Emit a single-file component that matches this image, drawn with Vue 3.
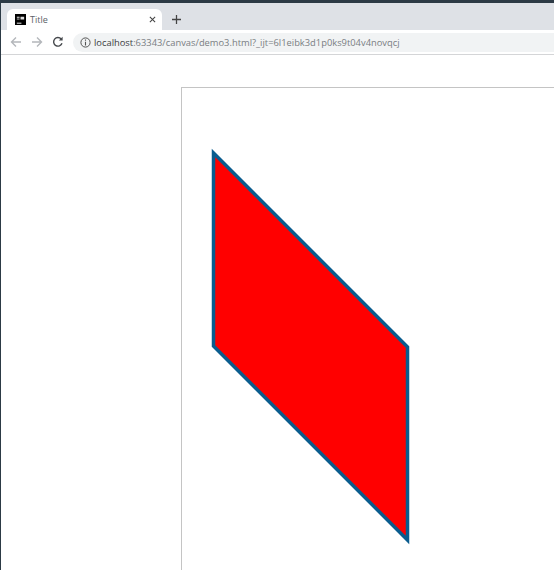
<script setup>
const url = { host: 'localhost', rest: ':63343/canvas/demo3.html?_ijt=6l1eibk3d1p0ks9t04v4novqcj' }
</script>

<template>
  <div class="window">
    <div class="tabstrip">
      <div class="tab">
        <svg class="favicon" width="11" height="11" viewBox="0 0 12 12">
          <rect width="12" height="12" fill="#000" />
          <rect x="2" y="3" width="3" height="1" fill="#fff" />
          <rect x="2" y="5" width="3" height="1" fill="#ccc" />
          <rect x="6" y="3" width="4" height="3" fill="#ddd" />
          <rect x="2" y="9.5" width="5" height="1" fill="#fff" />
        </svg>
        <span class="tab-title">Title</span>
        <svg class="tab-close" width="7" height="7" viewBox="0 0 8 8">
          <path d="M1 1 7 7M7 1 1 7" stroke="#444" stroke-width="1.2" fill="none" />
        </svg>
      </div>
      <svg class="new-tab" width="9" height="9" viewBox="0 0 10 10">
        <path d="M5 0V10M0 5H10" stroke="#444" stroke-width="1.4" fill="none" />
      </svg>
    </div>
    <div class="toolbar">
      <svg class="nav first" width="12" height="12" viewBox="0 0 12 12">
        <path d="M11 6H1.5M6 1.5 1.5 6 6 10.5" stroke="#b4b7bb" stroke-width="1.4" fill="none" />
      </svg>
      <svg class="nav" width="12" height="12" viewBox="0 0 12 12">
        <path d="M1 6H10.5M6 1.5 10.5 6 6 10.5" stroke="#b4b7bb" stroke-width="1.4" fill="none" />
      </svg>
      <svg class="nav" width="12" height="12" viewBox="0 0 12 12">
        <path d="M10 7.2A4.3 4.3 0 1 1 9.2 3" stroke="#45484c" stroke-width="1.4" fill="none" />
        <path d="M10.6 0.8V4.6H6.8Z" fill="#45484c" />
      </svg>
      <div class="omnibox">
        <svg class="info" width="11" height="11" viewBox="0 0 11 11">
          <circle cx="5.5" cy="5.5" r="4.6" stroke="#555" stroke-width="1" fill="none" />
          <path d="M5.5 4.8V8.4M5.5 2.6V3.8" stroke="#555" stroke-width="1.1" fill="none" />
        </svg>
        <span class="url"><span class="host">{{ url.host }}</span>{{ url.rest }}</span>
      </div>
    </div>
    <div class="page">
      <div class="canvas">
        <svg class="drawing" width="373" height="483" viewBox="0 0 373 483">
          <polygon points="31.5,65 31.5,258 225.5,452 225.5,259" fill="#f00" stroke="#0a5c8e" stroke-width="3.5" />
        </svg>
      </div>
    </div>
  </div>
</template>

<style scoped>
.window {
  width: 554px;
  height: 570px;
  overflow: hidden;
  display: flex;
  flex-direction: column;
  background: #fff;
  border-left: 1px solid #2c3a45;
  box-sizing: border-box;
  font-family: "Open Sans", "Noto Sans", sans-serif;
}
.tabstrip {
  height: 30px;
  flex: none;
  box-sizing: border-box;
  border-top: 3px solid #2c3a45;
  background: #dee1e6;
  padding: 6px 0 0 6px;
  display: flex;
  align-items: flex-start;
}
.tab {
  width: 155px;
  height: 21px;
  background: #fff;
  border-radius: 6px 6px 0 0;
  display: flex;
  align-items: center;
  padding: 0 6px 0 8px;
  box-sizing: border-box;
}
.tab-title {
  margin-left: 4px;
  font-size: 9px;
  color: #5b5f66;
  flex: 1;
}
.new-tab {
  margin: 6px 0 0 10px;
}
.toolbar {
  height: 25px;
  flex: none;
  box-sizing: border-box;
  display: flex;
  align-items: center;
  background: #fff;
  border-bottom: 1px solid #d4d5d7;
}
.nav {
  margin-left: 9px;
  flex: none;
}
.nav.first {
  margin-left: 9px;
}
.omnibox {
  margin-left: 9px;
  flex: 1;
  height: 19px;
  border-radius: 10px 0 0 10px;
  background: #f1f3f4;
  display: flex;
  align-items: center;
  padding-left: 7px;
}
.url {
  margin-left: 3px;
  font-size: 9.35px;
  color: #7a7e83;
  white-space: nowrap;
}
.host {
  color: #3c4043;
}
.page {
  flex: 1;
  min-height: 0;
  padding: 32px 0 0 180px;
}
.canvas {
  width: 400px;
  height: 500px;
  border: 1px solid #c4c4c4;
  box-sizing: border-box;
}
.drawing {
  display: block;
}
</style>
